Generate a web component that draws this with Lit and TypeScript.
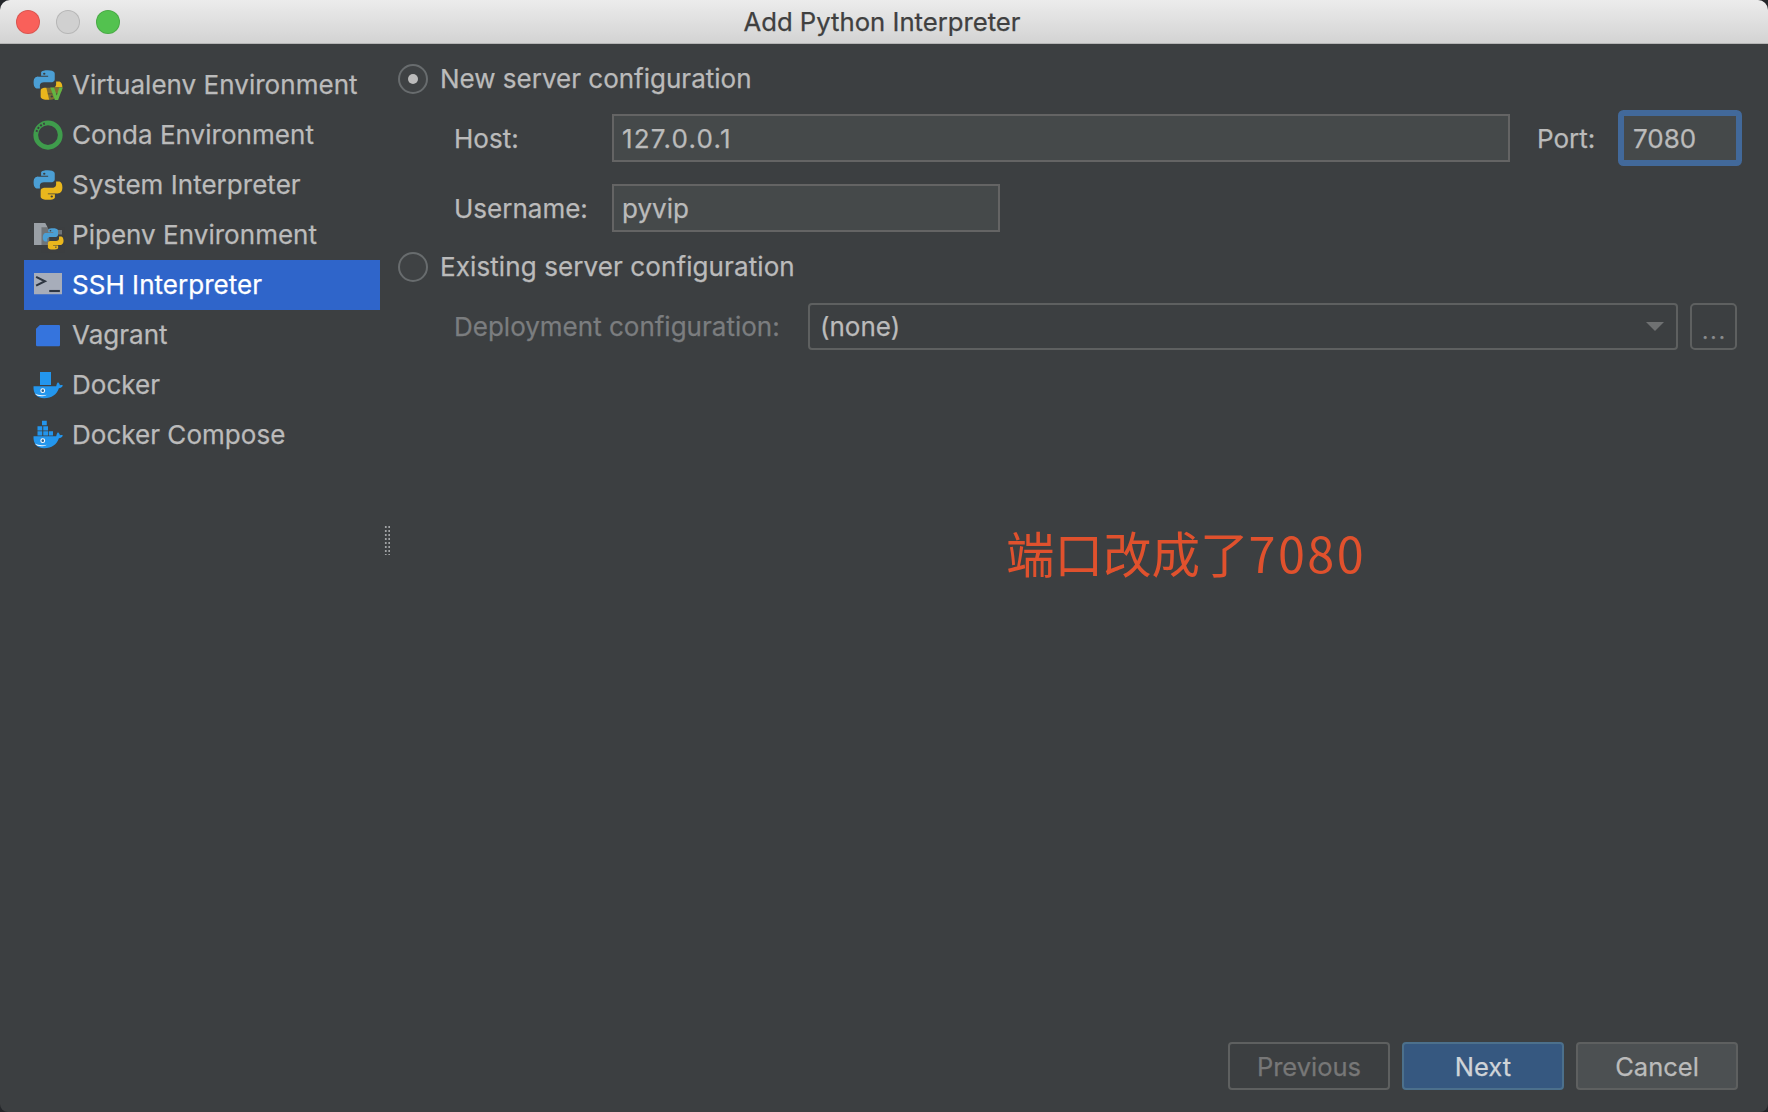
import { LitElement, html, css, svg } from "lit";
import { customElement } from "lit/decorators.js";

const pyBlue = "M11.9.2C7 .2 7.4 2.3 7.4 2.3v2.3h4.7v.7H5.500S2.400 5 2.400 10s2.600 4.800 2.600 4.800h1.600v-2.300s-.1-2.700 2.700-2.700h4.600s2.600 0 2.600-2.500V3.100S16.900.2 11.900.2Z";
const pyYellow = "M12.100 23.800c4.900 0 4.500-2.100 4.500-2.100v-2.300h-4.700v-.7h6.600s3.100.3 3.100-4.700-2.600-4.800-2.600-4.800h-1.600v2.300s.1 2.700-2.700 2.700H9.700s-2.600 0-2.600 2.500v4.200s-.4 2.900 4.600 2.900Z";
const python = svg`<g transform="translate(12 12) scale(1.2 1) translate(-12 -12)"><path d=${pyBlue} fill="#4b9fd5"/><path d=${pyYellow} fill="#eab71d"/><circle cx="9.500" cy="2.900" r=".8" fill="#3c3f41"/><circle cx="14.500" cy="21.100" r=".8" fill="#3c3f41"/></g>`;
const whale = svg`<path d="M.4 13H18.600c.2-1.300.6-2.400 1.400-3.200.9.7 1.400 1.600 1.500 2.500.7-.3 1.600-.3 2.400.1-.7 1.400-1.800 2-3.200 2.100C19 19.500 15 22.500 9 22.500 2.700 22.500.1 18.500.4 13Z" fill="#2396ed"/><path d="M1.500 18.800c2.600 1.500 6 1.700 9.500.9-2 1.500-7.500 2.300-9.500-.9Z" fill="#eef6fc"/><circle cx="7.800" cy="16.500" r="1.500" fill="#2b5f8c" stroke="#fff" stroke-width=".9"/>`;

const icons: Record<string, unknown> = {
  venv: svg`${python}<path d="M10.500 13.500h13.500v10.500h-11Z" fill="#3c3f41" opacity=".6"/><path d="M13.800 14h3l2.200 6.300 2-6.300h2.800l-3.700 10h-2.600Z" fill="#62b543"/>`,
  conda: svg`<circle cx="12" cy="12" r="9.800" fill="none" stroke="#3f9c4c" stroke-width="3.800"/><path d="M2.800 9.500A9.500 9.500 0 0 1 9.500 2.800" fill="none" stroke="#3c3f41" stroke-width="1.600" stroke-dasharray="1.500 1.300"/>`,
  python,
  pipenv: svg`<path d="M.8 2.400h9l3 5.600h10.400v3.500H13v8.500H.8Z" fill="#9aa0a6"/><g transform="translate(7.500 6.500) scale(.72)"><path d="M-1-1h26v28H-1Z" fill="#3c3f41" opacity=".45"/>${python}</g>`,
  ssh: svg`<rect x=".8" y="2.400" width="22.400" height="17" fill="#a7adba"/><path d="M2.500 5.500 9.500 9l-7 3.500" fill="none" stroke="#2e3642" stroke-width="1.700"/><path d="M13 16.800h8.500" stroke="#2e3642" stroke-width="1.700"/>`,
  vagrant: svg`<path d="M5.500 4h15.300a.8.8 0 0 1 .8.8V20a1 1 0 0 1-1 1H3.400a1 1 0 0 1-1-1V7Z" fill="#3574dd"/>`,
  docker: svg`<rect x="5.600" y="1.600" width="8.800" height="10.400" fill="#2396ed"/>${whale}`,
  compose: svg`<rect x="7.200" y=".6" width="3.800" height="3.600" fill="#2396ed"/><rect x="3.600" y="5" width="3.800" height="3.400" fill="#2396ed"/><rect x="8.200" y="5" width="3.800" height="3.400" fill="#2396ed"/><rect x="3.600" y="9" width="3.800" height="3.400" fill="#2396ed"/><rect x="8.200" y="9" width="3.800" height="3.400" fill="#2396ed"/><rect x="12.600" y="9" width="3.400" height="3.400" fill="#2396ed"/>${whale}`,
};

const rows = [
  ["venv", "Virtualenv Environment"],
  ["conda", "Conda Environment"],
  ["python", "System Interpreter"],
  ["pipenv", "Pipenv Environment"],
  ["ssh", "SSH Interpreter"],
  ["vagrant", "Vagrant"],
  ["docker", "Docker"],
  ["compose", "Docker Compose"],
];

@customElement("app-root")
export class AppRoot extends LitElement {
  static styles = css`
    :host {
      display: block;
      width: 1768px;
      height: 1112px;
      background: #24262a;
      font-family: Inter, "Noto Sans", sans-serif;
      font-size: 26px;
      color: #bbbbbb;
      -webkit-text-stroke: 0.25px currentColor;
    }
    .window {
      height: 100%;
      display: flex;
      flex-direction: column;
      border-radius: 10px 10px 8px 8px;
      overflow: hidden;
      background: #3c3f41;
      position: relative;
    }
    .titlebar {
      height: 43px;
      flex: none;
      display: flex;
      align-items: center;
      justify-content: center;
      position: relative;
      background: linear-gradient(#ececec, #d3d3d3);
      border-bottom: 1px solid #b5b5b5;
      color: #404040;
      font-size: 25.700px;
      padding-right: 4px;
    }
    .lights {
      position: absolute;
      left: 16px;
      top: 10px;
      display: flex;
      gap: 16px;
    }
    .light { width: 24px; height: 24px; border-radius: 50%; box-sizing: border-box; border: 1px solid rgba(0,0,0,.12); }
    .red { background: #f9605a; }
    .gray { background: #d0d0d0; }
    .green { background: #53c24f; }
    .body { flex: 1; display: flex; min-height: 0; }
    .sidebar { width: 356px; margin-left: 24px; padding-top: 16px; flex: none; }
    .item {
      height: 50px;
      display: flex;
      align-items: center;
      padding-left: 9px;
      gap: 9px;
    }
    .item span { padding-bottom: 2px; letter-spacing: 0.03px; }
    .item.sel { background: #2f65ca; color: #fff; }
    .item svg { width: 30px; height: 30px; flex: none; overflow: visible; }
    .main {
      flex: 1;
      display: flex;
      flex-direction: column;
      padding: 18px 30px 22px 18px;
      min-width: 0;
    }
    .radio-row { display: flex; align-items: center; gap: 12px; height: 34px; }
    .radio-row.second { margin-top: 18px; }
    .radio-text { padding-bottom: 1px; }
    .second .radio-text { letter-spacing: 0.1px; }
    .radio {
      width: 30px;
      height: 30px;
      box-sizing: border-box;
      border-radius: 50%;
      border: 2px solid #686c6e;
      background: #3f4244;
      display: flex;
      align-items: center;
      justify-content: center;
    }
    .dot { width: 10px; height: 10px; border-radius: 50%; background: #bbb; }
    .field-row { display: flex; align-items: center; margin-left: 56px; height: 48px; }
    .host { margin-top: 18px; }
    .user { margin-top: 22px; }
    .deploy { margin-top: 18px; }
    .label { width: 158px; flex: none; }
    .deploy .label { width: 354px; color: #7b7d7f; }
    .input {
      height: 48px;
      box-sizing: border-box;
      background: #45494a;
      border: 2px solid #646464;
      padding: 0 0 0 8px;
      display: flex;
      align-items: center;
    }
    .input.grow { flex: 1; min-width: 0; letter-spacing: 1.200px; }
    .input.user-input { width: 388px; }
    .port-label { width: 85px; margin-left: 27px; flex: none; }
    .input.port {
      width: 116px;
      flex: none;
      border-color: #42699a;
      border-radius: 2px;
      box-shadow: 0 0 0 4px #42699a;
      padding-left: 9px;
    }
    .combo {
      flex: 1;
      height: 47px;
      box-sizing: border-box;
      border: 2px solid #5e6060;
      border-radius: 4px;
      display: flex;
      align-items: center;
      padding: 0 12px 0 10px;
      justify-content: space-between;
    }
    .arrow {
      width: 0;
      height: 0;
      border-left: 9px solid transparent;
      border-right: 9px solid transparent;
      border-top: 9px solid #6f7172;
    }
    .more {
      width: 47px;
      height: 47px;
      box-sizing: border-box;
      margin: 0 1px 0 12px;
      flex: none;
      border: 2px solid #5e6060;
      border-radius: 5px;
      display: flex;
      align-items: flex-end;
      justify-content: center;
      line-height: 1;
      padding: 0 0 6px 2px;
      color: #8a8c8e;
      font-size: 22px;
      letter-spacing: 2px;
    }
    .spacer { flex: 1; }
    .footer { display: flex; justify-content: flex-end; gap: 12px; }
    .btn {
      width: 162px;
      height: 48px;
      box-sizing: border-box;
      border: 2px solid #5e6060;
      border-radius: 4px;
      display: flex;
      align-items: center;
      justify-content: center;
      font-size: 25.500px;
    }
    .prev { color: #777; }
    .next { background: #365880; border-color: #4c708c; color: #d0d4d8; }
    .cancel { background: #4c5052; }
    .note {
      position: absolute;
      left: 1006px;
      top: 519px;
      color: #e0512d;
      font-size: 48.500px;
      line-height: 66px;
      font-family: "Noto Sans CJK SC", sans-serif;
      -webkit-text-stroke: 0;
    }
    .digits { letter-spacing: 2.500px; }
    .grip {
      position: absolute;
      left: 384px;
      top: 525px;
      width: 6px;
      height: 30px;
      background-image: radial-gradient(circle, #a0a2a4 1px, transparent 1.300px);
      background-size: 3.500px 4px;
    }
  `;

  render() {
    return html`
      <div class="window">
        <div class="titlebar">
          <div class="lights">
            <div class="light red"></div>
            <div class="light gray"></div>
            <div class="light green"></div>
          </div>
          Add Python Interpreter
        </div>
        <div class="body">
          <div class="sidebar">
            ${rows.map(
              ([k, t]) => html`<div class="item ${k === "ssh" ? "sel" : ""}">
                <svg viewBox="0 0 24 24">${icons[k]}</svg>
                <span>${t}</span>
              </div>`
            )}
          </div>
          <div class="main">
            <div class="radio-row"><div class="radio"><div class="dot"></div></div><span class="radio-text">New server configuration</span></div>
            <div class="field-row host">
              <div class="label">Host:</div>
              <div class="input grow">127.0.0.1</div>
              <div class="port-label">Port:</div>
              <div class="input port">7080</div>
            </div>
            <div class="field-row user">
              <div class="label">Username:</div>
              <div class="input user-input">pyvip</div>
            </div>
            <div class="radio-row second"><div class="radio"></div><span class="radio-text">Existing server configuration</span></div>
            <div class="field-row deploy">
              <div class="label">Deployment configuration:</div>
              <div class="combo"><span>(none)</span><div class="arrow"></div></div>
              <div class="more">...</div>
            </div>
            <div class="spacer"></div>
            <div class="footer">
              <div class="btn prev">Previous</div>
              <div class="btn next">Next</div>
              <div class="btn cancel">Cancel</div>
            </div>
          </div>
        </div>
        <div class="note">端口改成了<span class="digits">7080</span></div>
        <div class="grip"></div>
      </div>
    `;
  }
}
